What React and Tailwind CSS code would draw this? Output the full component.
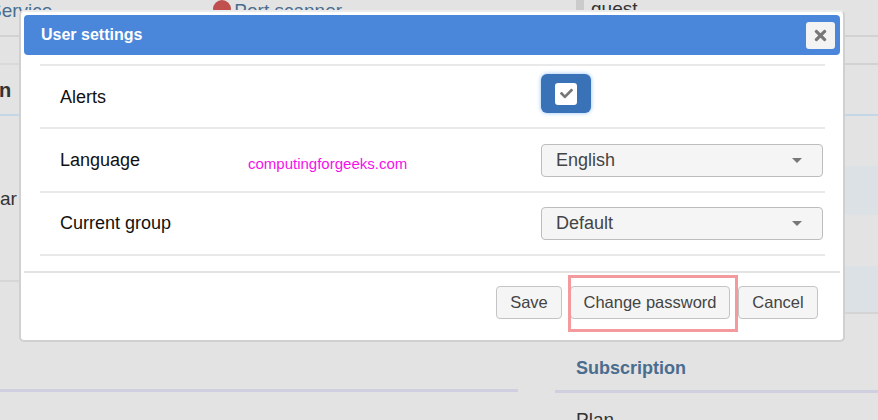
import React from "react";
import { FaTimes, FaCheck } from "react-icons/fa";

const SelectBox = ({ value }) => (
  <div className="w-[282px] h-[33px] flex items-center justify-between pl-[14px] pr-[20px] bg-[#f5f5f5] border border-[#bdbdbd] rounded-[4px] text-[18px] text-[#444]">
    <span className="pt-[1px]">{value}</span>
    <span className="w-0 h-0 border-l-[5.5px] border-r-[5.5px] border-t-[5px] border-l-transparent border-r-transparent border-t-[#777]" />
  </div>
);

const SettingRow = ({ label, children }) => (
  <div className="h-[63.4px] flex items-center border-b-2 border-[#e9e9e9] pl-[20px]">
    <div className="w-[481px] pt-[1px] text-[18px] text-[#111]">{label}</div>
    {children}
  </div>
);

const FooterButton = ({ children, width }) => (
  <button className={`h-[33px] ${width} bg-[#f5f5f5] border border-[#c4c4c4] rounded-[4px] text-[16.5px] text-[#444]`}>
    {children}
  </button>
);

const BackgroundPage = () => (
  <div className="h-[420px] grid grid-cols-[518px_37px_323px] bg-[#e3e3e3] text-[19px] font-['Liberation_Sans',sans-serif]">
    <div className="flex flex-col">
      <div className="h-[37px] border-b-2 border-[#d2d2d2] flex text-[#4a6d8f]">
        <span className="ml-[-11px] mt-[-3px]">Service</span>
        <span className="ml-[161px] mt-[-3px] flex items-start gap-[3px]">
          <span className="w-[18px] h-[18px] mt-[3px] rounded-full bg-[#c0504d]" />
          Port scanner
        </span>
      </div>
      <div className="h-[28px] border-b-2 border-[#d9d9d9]" />
      <div className="h-[51px] border-b-2 border-[#c5d6e6] flex items-center">
        <span className="ml-[-1px] pt-[1px] font-bold text-[20px] text-[#333]">n</span>
      </div>
      <div className="h-[166px] border-b-2 border-[#d6d6d6] flex items-center">
        <span className="text-[#333] mt-[2px]">ar</span>
      </div>
      <div className="h-[110px] border-b-[3px] border-[#cfcfe0]" />
    </div>
    <div />
    <div className="flex flex-col">
      <div className="h-[37px] border-b-2 border-[#d2d2d2] pl-[21px] flex items-start text-[#333]">
        <div className="w-[8px] h-[10px] bg-[#cbcbcb]" />
        <span className="ml-[7px] mt-[-5px]">guest</span>
      </div>
      <div className="h-[28px] border-b-2 border-[#d2d2d2]" />
      <div className="h-[51px] border-b-2 border-[#c5d6e6]" />
      <div className="h-[50px]" />
      <div className="h-[49px] bg-[#dce1e6]" />
      <div className="h-[51px]" />
      <div className="h-[48px] bg-[#dce1e6] border-b-2 border-[#d4d4d4]" />
      <div className="h-[79px] border-b-[3px] border-[#cfcfe0] flex items-end pl-[21px] pb-[8px]">
        <span className="font-bold text-[18px] text-[#4a6d8f]">Subscription</span>
      </div>
      <div className="pl-[21px] pt-[13px] text-[#333]">Plan</div>
    </div>
  </div>
);

export default function App() {
  return (
    <div className="relative w-[878px] h-[420px] overflow-hidden font-['Liberation_Sans',sans-serif]">
      <BackgroundPage />

      {/* modal */}
      <div className="absolute left-[19px] top-[10px] w-[826px] h-[332px] bg-white border-2 border-[#d0d0d0] border-t-[#ececec] rounded-[5px] px-[3px] pt-[3px]">
        <div className="h-[40px] flex items-center justify-between bg-[#4a86da] rounded-[4px] pl-[17px] pr-[5px]">
          <span className="text-white font-bold text-[16px]">User settings</span>
          <button className="w-[29px] h-[27px] flex items-center justify-center bg-[#f3f3f3] rounded-[3px] text-[#777]">
            <FaTimes size={17} />
          </button>
        </div>

        <div className="ml-[16px] mr-[15px] mt-[9px] border-t-2 border-[#e9e9e9]">
          <SettingRow label="Alerts">
            <div className="w-[50px] h-[39px] -mt-[6px] flex items-center justify-center bg-[#3a72b8] rounded-[6px] shadow-[0_0_4px_#8fc0f5]">
              <div className="w-[22px] h-[22px] flex items-center justify-center bg-white rounded-[3px] text-[#777]">
                <FaCheck size={13} />
              </div>
            </div>
          </SettingRow>
          <SettingRow label="Language">
            <SelectBox value="English" />
          </SettingRow>
          <SettingRow label="Current group">
            <SelectBox value="Default" />
          </SettingRow>
        </div>

        <div className="mt-[15px] border-t-2 border-[#e4e4e4] pt-[13px] pr-[22px] flex justify-end gap-[8px]">
          <FooterButton width="w-[66px]">Save</FooterButton>
          <FooterButton width="w-[160px]">Change password</FooterButton>
          <FooterButton width="w-[80px]">Cancel</FooterButton>
        </div>
      </div>

      {/* annotations on top of the screenshot */}
      <span className="absolute left-[248px] top-[153px] text-[15px] text-[#f510e8]">computingforgeeks.com</span>
      <div className="absolute left-[568px] top-[275px] w-[170px] h-[57px] border-[3px] border-[#f29a9e]" />
    </div>
  );
}
